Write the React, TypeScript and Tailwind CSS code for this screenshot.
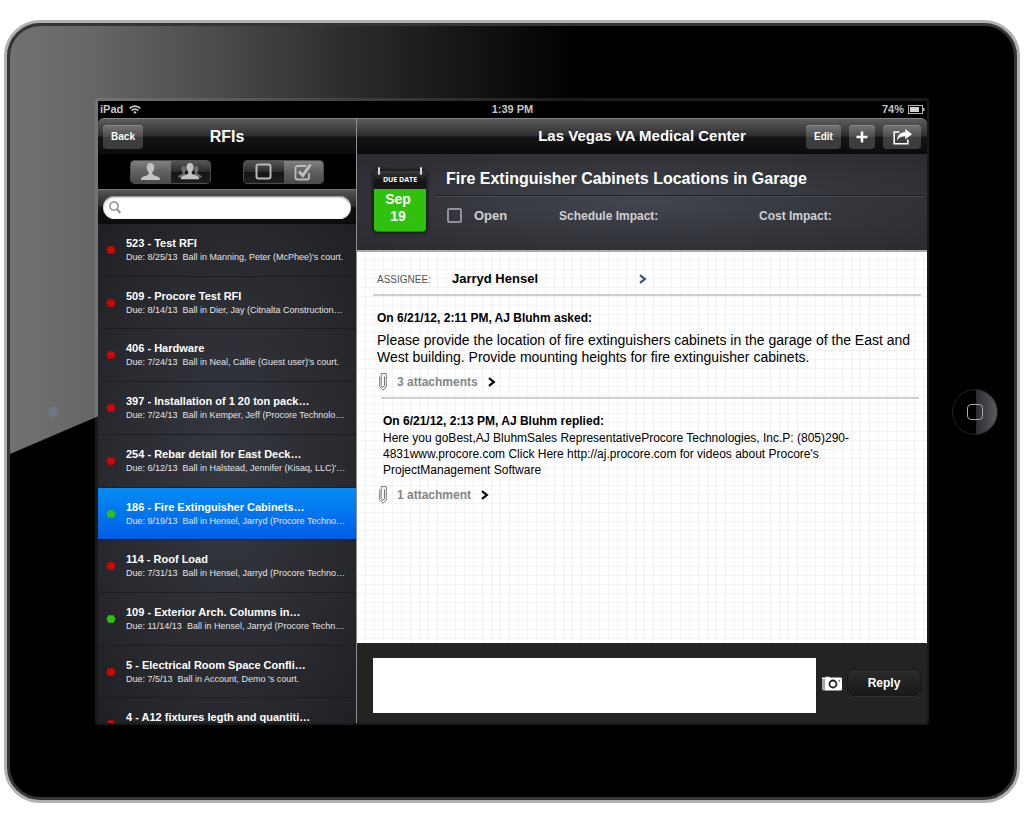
import React, { useState } from 'react';
import { clsx } from 'clsx';

interface Rfi {
  id: number;
  title: string;
  summary?: string;
  overdue: boolean;
}

const RFIS: Rfi[] = [
  { id: 523, title: 'Test RFI', summary: "Due: 8/25/13  Ball in Manning, Peter (McPhee)'s court.", overdue: true },
  { id: 509, title: 'Procore Test RFI', summary: 'Due: 8/14/13  Ball in Dier, Jay (Citnalta Construction…', overdue: true },
  { id: 406, title: 'Hardware', summary: "Due: 7/24/13  Ball in Neal, Callie (Guest user)'s court.", overdue: true },
  { id: 397, title: 'Installation of 1 20 ton pack…', summary: 'Due: 7/24/13  Ball in Kemper, Jeff (Procore Technolo…', overdue: true },
  { id: 254, title: 'Rebar detail for East Deck…', summary: "Due: 6/12/13  Ball in Halstead, Jennifer (Kisaq, LLC)'…", overdue: true },
  { id: 186, title: 'Fire Extinguisher Cabinets…', summary: 'Due: 9/19/13  Ball in Hensel, Jarryd (Procore Techno…', overdue: false },
  { id: 114, title: 'Roof Load', summary: 'Due: 7/31/13  Ball in Hensel, Jarryd (Procore Techno…', overdue: true },
  { id: 109, title: 'Exterior Arch. Columns in…', summary: 'Due: 11/14/13  Ball in Hensel, Jarryd (Procore Techn…', overdue: false },
  { id: 5, title: 'Electrical Room Space Confli…', summary: "Due: 7/5/13  Ball in Account, Demo 's court.", overdue: true },
  { id: 4, title: 'A12 fixtures legth and quantiti…', overdue: true },
];

const PERSON = 'M9.5 0c2.4 0 3.7 1.8 3.7 4.2 0 2-.8 4-1.9 5v1.6c.3 1.2 2.4 1.7 4.5 2.5 2 .8 3.2 1.6 3.2 3.7H0c0-2.1 1.2-2.9 3.2-3.7 2.1-.8 4.2-1.3 4.5-2.5V9.2c-1.100-1-1.900-3-1.900-5C5.800 1.800 7.100 0 9.500 0z';

const NAV_BAR =
  'grid h-9 shrink-0 grid-cols-[1fr_auto_1fr] items-center border-t border-[#858585] bg-[linear-gradient(#5c5c5c,#2d2d2d_48%,#141414_52%,#0b0b0b)]';
const NAV_BUTTON =
  'flex h-6 items-center justify-center rounded bg-[linear-gradient(#757575,#4e4e4e_48%,#3e3e3e_52%,#3b3b3b)] text-[10px] font-bold text-white shadow-[inset_0_1px_0_#8a8a8a]';

function WifiIcon() {
  return (
    <svg width="12" height="9" viewBox="0 0 12 9" fill="none" stroke="#c6c6c6" strokeWidth="1.7">
      <path d="M.6 3.300a7.600 7.600 0 0 1 10.800 0M2.600 5.600a4.800 4.800 0 0 1 6.800 0" />
      <path d="M6 9 4.300 7.200a2.400 2.400 0 0 1 3.400 0z" fill="#c6c6c6" stroke="none" />
    </svg>
  );
}

function BatteryIcon() {
  return (
    <svg width="17" height="9" viewBox="0 0 17 9">
      <rect x=".5" y=".5" width="14" height="8" fill="none" stroke="#b5b5b5" />
      <rect x="2" y="2" width="9" height="5" fill="#d2d2d2" />
      <path d="M15 3h1.500v3H15z" fill="#b5b5b5" />
    </svg>
  );
}

function PersonIcon() {
  return (
    <svg width="19" height="17" viewBox="0 0 19 17">
      <path d={PERSON} fill="#c3c3c3" />
    </svg>
  );
}

function GroupIcon() {
  return (
    <svg width="24" height="17" viewBox="0 0 24 17">
      <g fill="#6f6f6f">
        <path d={PERSON} transform="translate(0 3) scale(.6 .68)" />
        <path d={PERSON} transform="translate(12.500 3) scale(.6 .68)" />
      </g>
      <path d={PERSON} transform="translate(2.800 0) scale(.97 .95)" fill="#c3c3c3" />
    </svg>
  );
}

function BoxIcon() {
  return (
    <svg width="17" height="17" viewBox="0 0 17 17" fill="none" stroke="#b9b9b9" strokeWidth="2">
      <rect x="1.500" y="1.500" width="14" height="14" rx="2" />
    </svg>
  );
}

function CheckedBoxIcon() {
  return (
    <svg width="19" height="18" viewBox="0 0 19 18" fill="none" stroke="#bdbdbd">
      <path d="M12.500 3H3.500a2 2 0 0 0-2 2v9.500a2 2 0 0 0 2 2H13a2 2 0 0 0 2-2V10" strokeWidth="1.800" />
      <path d="M5 8.500 8.700 12.500 16.500 1.500" strokeWidth="3" />
    </svg>
  );
}

function SearchIcon() {
  return (
    <svg width="12" height="13" viewBox="0 0 12 13" fill="none" stroke="#8b8f96" strokeWidth="1.500">
      <circle cx="5" cy="5" r="4.100" />
      <path d="m8 8.200 3.300 3.800" strokeWidth="2" />
    </svg>
  );
}

function PlusIcon() {
  return (
    <svg width="12" height="12" viewBox="0 0 12 12" stroke="#fff" strokeWidth="2.500">
      <path d="M6 .5v11M.5 6h11" />
    </svg>
  );
}

function ShareIcon() {
  return (
    <svg width="19" height="16" viewBox="0 0 19 16">
      <path d="M6.500 3H1.200v11.800h13.600V10.500" fill="none" stroke="#fff" strokeWidth="1.600" />
      <path d="M12.300 0 19 5.200l-6.700 5V7.300C8.500 7.200 6 8.400 4 11.500c.2-4.800 3.300-8.200 8.300-8.500z" fill="#fff" />
    </svg>
  );
}

function ChevronIcon({ className }: { className?: string }) {
  return (
    <svg width="8" height="10" viewBox="0 0 8 10" fill="none" stroke="currentColor" strokeWidth="2.200" className={className}>
      <path d="M1 1.200 5.800 5 1 8.800" />
    </svg>
  );
}

function ClipIcon() {
  return (
    <svg width="8" height="18" viewBox="0 0 8 18" fill="none" stroke="#777" strokeWidth="1">
      <path d="M.7 3.500v10.200L4 17.300l3.300-3.600V.6H2.200v12.200c.4 1.700 2.900 1.700 3.300 0V3.500" />
    </svg>
  );
}

function CameraIcon() {
  return (
    <svg width="20" height="15" viewBox="0 0 20 15">
      <path d="M0 2.500h2.800v12H1.500A1.500 1.500 0 0 1 0 13z" fill="#a5a5a5" />
      <path d="M0 1.500h3.500V.7h4.200v.8h11A1.300 1.300 0 0 1 20 2.800v10.400a1.300 1.300 0 0 1-1.300 1.300H2.800V3H0z" fill="#fff" />
      <circle cx="11" cy="8" r="3.500" fill="#fff" stroke="#222" strokeWidth="1.800" />
      <circle cx="17.300" cy="4.800" r="1" fill="#777" />
    </svg>
  );
}

function StatusDot({ overdue }: { overdue: boolean }) {
  return (
    <svg width="10" height="8" viewBox="0 0 10 8" className="mt-2.5 shrink-0">
      <path d="M2.400.3h5.200L9.600 4 7.600 7.700H2.400L.4 4z" fill={overdue ? '#cf0505' : '#33bf12'} />
    </svg>
  );
}

// Diagonal reflection over the upper left of the glass
function Glare() {
  return (
    <svg className="absolute inset-0 h-full w-full" viewBox="0 0 1004 771" preserveAspectRatio="none">
      <defs>
        <linearGradient id="glare" gradientUnits="userSpaceOnUse" x1="0" y1="0" x2="600" y2="0">
          <stop offset="0" stopColor="#717171" />
          <stop offset=".14" stopColor="#666" />
          <stop offset=".32" stopColor="#4e4e4e" />
          <stop offset=".48" stopColor="#383838" />
          <stop offset=".58" stopColor="#2a2a2a" />
          <stop offset=".75" stopColor="#151616" />
          <stop offset=".95" stopColor="#000" />
        </linearGradient>
      </defs>
      <path d="M0 0h620L520 205 0 428z" fill="url(#glare)" />
    </svg>
  );
}

function Segments({ label, children }: { label: string; children: React.ReactNode }) {
  return (
    <div role="group" aria-label={label} className="flex h-6 w-[81px] overflow-hidden rounded border border-[#4c4c4c]">
      {children}
    </div>
  );
}

function Segment({ label, on, onClick, children }: { label: string; on: boolean; onClick: () => void; children: React.ReactNode }) {
  return (
    <button
      type="button"
      aria-label={label}
      aria-pressed={on}
      onClick={onClick}
      className={clsx(
        'flex flex-1 items-center justify-center',
        on ? 'bg-[linear-gradient(#808080,#606060_50%,#4b4b4b)]' : 'bg-[linear-gradient(#565656,#2c2c2c_48%,#151515_52%,#1f1f1f)]'
      )}
    >
      {children}
    </button>
  );
}

function Sidebar() {
  const [selected, setSelected] = useState(186);
  const [mine, setMine] = useState(true);
  const [closed, setClosed] = useState(true);

  return (
    <aside className="flex w-[259px] shrink-0 flex-col border-r border-[#8e8e8e]">
      <header className={clsx(NAV_BAR, 'rounded-tl-md px-[5px]')}>
        <button type="button" className={clsx(NAV_BUTTON, 'w-10')}>Back</button>
        <h1 className="text-base font-bold text-white">RFIs</h1>
      </header>

      <div className="flex h-[35px] shrink-0 items-center justify-center gap-8 bg-black">
        <Segments label="Ball in court">
          <Segment label="Mine" on={mine} onClick={() => setMine(true)}><PersonIcon /></Segment>
          <Segment label="Everyone" on={!mine} onClick={() => setMine(false)}><GroupIcon /></Segment>
        </Segments>
        <Segments label="Status">
          <Segment label="Open only" on={!closed} onClick={() => setClosed(false)}><BoxIcon /></Segment>
          <Segment label="Include closed" on={closed} onClick={() => setClosed(true)}><CheckedBoxIcon /></Segment>
        </Segments>
      </div>

      <div className="h-[35px] shrink-0 border-t border-[#777] bg-[linear-gradient(#555,#2a2a2a_48%,#111_52%,#0b0b0b)] px-[5px] pt-1.5">
        <label className="flex h-[23px] items-center rounded-full bg-white pl-1.5 shadow-[inset_0_1px_2px_#777]">
          <SearchIcon />
          <input type="search" aria-label="Search RFIs" className="min-w-0 flex-1 bg-transparent px-2 text-xs text-black outline-none" />
        </label>
      </div>

      <div className="min-h-0 flex-1 overflow-hidden bg-[radial-gradient(ellipse_at_center,#353841,#2a2b30_60%,#1f2023)]">
        <ul className="grid h-[527px] auto-rows-fr">
          {RFIS.map((rfi) => (
            <li key={rfi.id} className="border-b border-[#1d1e21]">
              <button
                type="button"
                onClick={() => setSelected(rfi.id)}
                className={clsx(
                  'flex h-full w-full items-start gap-2.5 pt-3 pl-2 text-left text-white',
                  rfi.id === selected && 'bg-[linear-gradient(#058cf5,#015de6)]'
                )}
              >
                <StatusDot overdue={rfi.overdue} />
                <span className="block whitespace-pre">
                  <span className="block text-[11px] leading-[14px] font-bold">{rfi.id} - {rfi.title}</span>
                  {rfi.summary && <span className="block text-[9px] leading-[14px] text-[#e4e4e4]">{rfi.summary}</span>}
                </span>
              </button>
            </li>
          ))}
        </ul>
      </div>
    </aside>
  );
}

function DueDate() {
  return (
    <div className="relative w-[52px] shrink-0 rounded-sm text-center font-bold text-white shadow-[0_0_3px_2px_#1c1d20]">
      <span className="absolute -top-1 left-1 h-2 w-0.5 rounded bg-[#d8d8d8]" />
      <span className="absolute -top-1 right-1 h-2 w-0.5 rounded bg-[#d8d8d8]" />
      <div className="rounded-t-sm bg-[linear-gradient(#3c3c3e,#161617_50%)] font-['Open_Sans',sans-serif] text-[7px] leading-[18px]">DUE DATE</div>
      <div className="rounded-b-sm border-b border-[#1d8a06] bg-[#2fc10d] pt-0.5 pr-1 pb-1.5 text-sm leading-[17px]">
        Sep
        <br />
        19
      </div>
    </div>
  );
}

function Attachments({ children }: { children: React.ReactNode }) {
  return (
    <button type="button" className="flex h-[18px] items-center gap-2.5 text-xs font-bold text-[#868686]">
      <ClipIcon />
      {children}
      <ChevronIcon className="text-black" />
    </button>
  );
}

function Detail() {
  return (
    <section className="flex min-w-0 flex-1 flex-col">
      <header className={clsx(NAV_BAR, 'rounded-tr-md px-[6px]')}>
        <h2 className="col-start-2 text-[15px] font-bold text-white">Las Vegas VA Medical Center</h2>
        <div className="flex justify-end gap-2">
          <button type="button" className={clsx(NAV_BUTTON, 'w-[35px]')}>Edit</button>
          <button type="button" aria-label="Add" className={clsx(NAV_BUTTON, 'w-[26px]')}><PlusIcon /></button>
          <button type="button" aria-label="Share" className={clsx(NAV_BUTTON, 'w-[38px]')}><ShareIcon /></button>
        </div>
      </header>

      <div className="flex h-[98px] shrink-0 items-start gap-2.5 border-b-2 border-[#aaa] bg-[radial-gradient(ellipse_at_center,#424650,#34363c_50%,#2b2c30)] pr-1 pl-[17px]">
        <div className="pt-[17px]">
          <DueDate />
        </div>
        <div className="flex-1">
          <h3 className="h-[42px] border-b border-[#202124] pl-2.5 text-base leading-[49px] font-bold text-white shadow-[0_1px_0_#484b52]">
            Fire Extinguisher Cabinets Locations in Garage
          </h3>
          <div className="grid h-10 grid-cols-[112px_200px_1fr] items-center pl-[11px] text-xs font-bold text-[#d0d0d0]">
            <label className="flex items-center gap-3 text-[13px]">
              <input type="checkbox" className="size-[15px] appearance-none rounded-xs border-2 border-[#8f9099] checked:bg-[#8f9099]" />
              Open
            </label>
            <span>Schedule Impact:</span>
            <span>Cost Impact:</span>
          </div>
        </div>
      </div>

      <div className="min-h-0 flex-1 overflow-hidden bg-white bg-[linear-gradient(to_right,transparent_8px,#f3f3f3_8px),linear-gradient(transparent_8px,#f3f3f3_8px)] bg-size-[9px_9px] pr-1.5 pl-4 text-black">
        <div className="grid h-11 grid-cols-[75px_187px_1fr] items-center border-b-2 border-[#cfcfcf] pt-3 pl-1">
          <span className="text-[10px] text-[#555]">ASSIGNEE:</span>
          <span className="text-[13px] font-bold">Jarryd Hensel</span>
          <button type="button" aria-label="Show assignee"><ChevronIcon className="text-[#34508c]" /></button>
        </div>

        <article className="pt-3.5 pl-1">
          <h4 className="text-xs leading-4 font-bold">On 6/21/12, 2:11 PM, AJ Bluhm asked:</h4>
          <p className="mt-1.5 mb-[7px] text-sm leading-[17px]">
            Please provide the location of fire extinguishers cabinets in the garage of the East and West building. Provide
            mounting heights for fire extinguisher cabinets.
          </p>
          <div className="pl-0.5">
            <Attachments>3 attachments</Attachments>
          </div>
        </article>

        <hr className="mt-1.5 mr-0.5 ml-2 border-t-2 border-[#cfcfcf]" />

        <article className="pt-3.5 pl-1.5">
          <div className="mb-2 max-w-[504px] pl-1 text-xs leading-4">
            <h4 className="font-bold">On 6/21/12, 2:13 PM, AJ Bluhm replied:</h4>
            <p className="mt-px">
              Here you goBest,AJ BluhmSales RepresentativeProcore Technologies, Inc.P: (805)290-4831www.procore.com Click
              Here http://aj.procore.com for videos about Procore's ProjectManagement Software
            </p>
          </div>
          <Attachments>1 attachment</Attachments>
        </article>
      </div>

      <footer className="flex shrink-0 items-center gap-1.5 bg-[#232323] py-2.5 pr-[7px] pl-4">
        <textarea aria-label="Reply text" className="mt-[5px] h-[55px] min-w-0 flex-1 resize-none bg-white p-2 text-xs text-black outline-none" />
        <button type="button" aria-label="Attach photo"><CameraIcon /></button>
        <button type="button" className="h-[26px] w-[72px] rounded-md bg-[linear-gradient(#2c2c2c,#181818)] text-xs font-bold text-white shadow-[0_1px_0_#333,0_0_1px_1px_#1b1b1b]">
          Reply
        </button>
      </footer>
    </section>
  );
}

export default function App() {
  return (
    <main className="flex h-screen bg-white px-1 py-5 font-['Liberation_Sans',Arial,sans-serif]">
      <div className="flex flex-1 rounded-[36px] border-3 border-[#b1b1b4] bg-[#353535] p-[3px]">
        <div className="relative flex flex-1 overflow-hidden rounded-[30px] bg-black">
          <Glare />
          <div className="relative flex w-[85px] shrink-0 items-center justify-center">
            <span className="flex size-2.5 items-center justify-center rounded-full bg-[#777]">
              <span className="size-1.5 rounded-full bg-[#6b7890]" />
            </span>
          </div>

          <div className="relative my-[72px] flex min-w-0 flex-1 flex-col overflow-hidden rounded-sm border-2 border-l-3 border-t-3 border-white/10 bg-black bg-clip-padding">
            <div className="grid h-[17px] shrink-0 grid-cols-3 items-center px-0.5 text-[11px] font-bold text-[#c6c6c6]">
              <span className="flex items-center gap-1.5">iPad <WifiIcon /></span>
              <span className="text-center">1:39 PM</span>
              <span className="flex items-center justify-end gap-1">74% <BatteryIcon /></span>
            </div>
            <div className="flex min-h-0 flex-1">
              <Sidebar />
              <Detail />
            </div>
          </div>

          <div className="relative flex w-[85px] shrink-0 items-center justify-end pr-4">
            <button
              type="button"
              aria-label="Home"
              className="flex size-[46px] items-center justify-center rounded-full border border-[#222] bg-[linear-gradient(to_right,#000_52%,#2c2d30_53%,#5b5c62)]"
            >
              <span className="size-4 rounded border border-[#aaa]" />
            </button>
          </div>
        </div>
      </div>
    </main>
  );
}
